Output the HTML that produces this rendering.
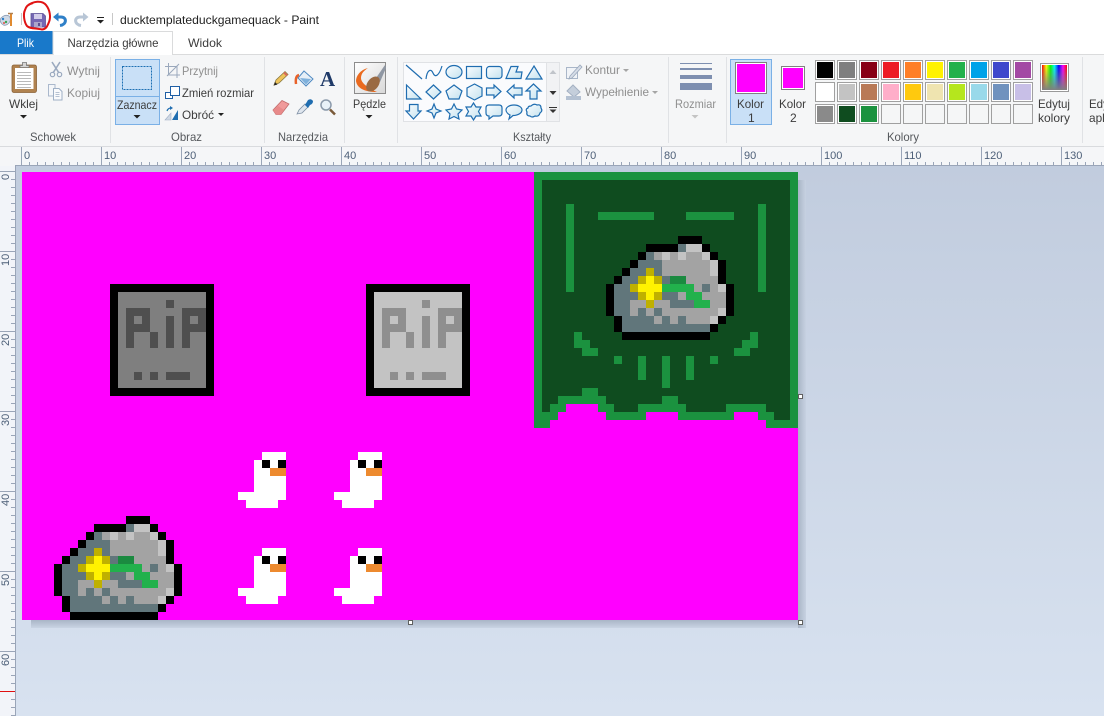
<!DOCTYPE html>
<html><head><meta charset="utf-8"><title>ducktemplateduckgamequack - Paint</title>
<style>
html,body{margin:0;padding:0;width:1104px;height:716px;overflow:hidden;background:#fff}
svg{display:block;position:absolute;left:0;top:0}
text{font-family:"Liberation Sans",sans-serif;font-size:12px;fill:#3c3c3c}
.g{fill:#8f8f8f}
.l{font-size:12px;fill:#55585c}
.r{font-size:11px;fill:#4d5f78}
.p path,.p rect{shape-rendering:crispEdges}
.s path,.s ellipse,.s rect{fill:url(#sf);stroke:#1f6db0;stroke-width:1.2}
</style></head><body>
<svg width="1104" height="716" viewBox="0 0 1104 716" xmlns="http://www.w3.org/2000/svg">
<defs>
<linearGradient id="bg" x1="0" y1="0" x2="0" y2="1"><stop offset="0" stop-color="#c1ccde"/><stop offset="1" stop-color="#d8e2f0"/></linearGradient>
<linearGradient id="sf" x1="0" y1="0" x2="1" y2="1"><stop offset="0" stop-color="#fbfdff"/><stop offset="1" stop-color="#c4e2ee"/></linearGradient>
<linearGradient id="shb" x1="0" y1="0" x2="0" y2="1"><stop offset="0" stop-color="#a9b5c6"/><stop offset="1" stop-color="#c9d4e4"/></linearGradient>
<linearGradient id="shr" x1="0" y1="0" x2="1" y2="0"><stop offset="0" stop-color="#a9b5c6"/><stop offset="1" stop-color="#c7d2e2"/></linearGradient>
<linearGradient id="rb" x1="0" y1="0" x2="1" y2="0"><stop offset="0" stop-color="#f00"/><stop offset=".17" stop-color="#ff0"/><stop offset=".34" stop-color="#0f0"/><stop offset=".5" stop-color="#0ff"/><stop offset=".67" stop-color="#00f"/><stop offset=".84" stop-color="#f0f"/><stop offset="1" stop-color="#f00"/></linearGradient>
<linearGradient id="rg" x1="0" y1="0" x2="0" y2="1"><stop offset="0" stop-color="#808080" stop-opacity="0"/><stop offset="1" stop-color="#808080"/></linearGradient>
<linearGradient id="br" x1="0" y1="0" x2="1" y2="1"><stop offset="0" stop-color="#fff"/><stop offset="1" stop-color="#d8d8d8"/></linearGradient>
<pattern id="tk" x="21" y="0" width="8" height="716" patternUnits="userSpaceOnUse"><rect x="0" y="0" width="1" height="716" fill="#9aa5b8"/></pattern>
<pattern id="tl" x="0" y="171" width="16" height="8" patternUnits="userSpaceOnUse"><rect x="0" y="0" width="16" height="1" fill="#9aa5b8"/></pattern>
<g id="rock" stroke-width="1" fill="none">
<path stroke="#000" d="M9 .5h3M5 1.5h4M12 1.5h1M4 2.5h1M13 2.5h1M3 3.5h1M14 3.5h1M2 4.5h1M14 4.5h1M1 5.5h1M14 5.5h1M0 6.5h1M15 6.5h1M0 7.5h1M15 7.5h1M0 8.5h1M15 8.5h1M0 9.5h1M15 9.5h1M1 10.5h1M14 10.5h1M1 11.5h1M13 11.5h1M2 12.5h11"/>
<path stroke="#61767b" d="M9 1.5h1M5 2.5h1M4 3.5h3M3 4.5h2M6 4.5h1M2 5.5h2M7 5.5h1M1 6.5h2M12 6.5h1M1 7.5h3M7 7.5h2M1 8.5h2M8 8.5h3M1 9.5h2M4 9.5h1M6 9.5h1M2 10.5h4M7 10.5h1M9 10.5h1M2 11.5h11"/>
<path stroke="#a3a3a3" d="M6 2.5h1M8 2.5h1M10 2.5h2M7 3.5h6M7 4.5h6M10 5.5h4M11 6.5h1M13 6.5h1M9 7.5h1M12 7.5h3M3 8.5h2M6 8.5h2M13 8.5h2M3 9.5h1M5 9.5h1M7 9.5h7M6 10.5h1M8 10.5h1M10 10.5h3"/>
<path stroke="#c3c3c3" d="M10 1.5h2M7 2.5h1M9 2.5h1M12 2.5h1M13 3.5h1M13 4.5h1M14 6.5h1M14 9.5h1M13 10.5h1"/>
<path stroke="#bfb000" d="M5 4.5h1M4 5.5h1M6 5.5h1M3 6.5h1M4 7.5h1M6 7.5h1M5 8.5h1"/>
<path stroke="#fff200" d="M5 5.5h1M4 6.5h3M5 7.5h1"/>
<path stroke="#22b14c" d="M7 6.5h4M10 7.5h2M11 8.5h2"/>
<path stroke="#1b8a40" d="M8 5.5h2"/>
</g>
<g id="duck" stroke-width="1" fill="none">
<path stroke="#fff" d="M3 .5h3M2 1.5h1M4 1.5h1M2 2.5h2M2 3.5h4M2 4.5h4M0 5.5h6M1 6.5h4"/>
<path stroke="#000" d="M3 1.5h1M5 1.5h1"/>
<path stroke="#ed8a2f" d="M4 2.5h2"/>
</g>
</defs>

<!-- top chrome -->
<rect width="1104" height="54" fill="#fff"/>
<rect y="54" width="1104" height="92" fill="#f5f6f7"/>
<rect y="54" width="1104" height="1" fill="#dadbdc"/>
<rect y="146" width="1104" height="1" fill="#d9dbde"/>
<rect y="147" width="1104" height="19" fill="#f5f6f8"/>

<!-- QAT -->
<g>
<path d="M1 18 Q5 14 9 16 Q12 19 9 23 Q5 27 2 24 Q-1 21 1 18Z" fill="#cfd9e6" stroke="#8c9db5" stroke-width=".8"/>
<circle cx="3" cy="19" r="1.2" fill="#2f80c8"/><circle cx="6" cy="22" r="1.2" fill="#3aa655"/><circle cx="4" cy="23" r="1" fill="#e0564a"/>
<path d="M11 13 L11 26" stroke="#e08a30" stroke-width="2"/><path d="M8 13.5h5" stroke="#b08050" stroke-width="1.5"/>
<rect x="21" y="13" width="1" height="12" fill="#c8c8c8"/>
<path d="M31 13.5H43L45.5 16V27H31Z" fill="#7467b3" stroke="#5f5499" stroke-width=".8"/>
<rect x="34" y="14" width="8" height="5" fill="#d3cdea"/>
<rect x="34" y="22" width="8" height="5" fill="#aba5cb"/><rect x="38" y="23" width="2" height="3" fill="#5b5090"/>
<path d="M53 17 L58.5 12.5 L58.5 21.5Z" fill="#2f80c8"/>
<path d="M57 17H61C67 17 67 24.5 60 25.5" fill="none" stroke="#2f80c8" stroke-width="3"/>
<path d="M88.5 17 L83 12.5 L83 21.5Z" fill="#b8c6d6"/>
<path d="M84 17H80C74 17 74 24.5 81 25.5" fill="none" stroke="#b8c6d6" stroke-width="3"/>
<rect x="97" y="17" width="7" height="1" fill="#222"/>
<path d="M97 20H104L100.5 23.5Z" fill="#222"/>
<rect x="112" y="13" width="1" height="12" fill="#c8c8c8"/>
</g>
<path d="M27 6C33 1 42 0 46 5C50 10 51 17 49 22C47 27 46 29 42 29.500C36 28 30 29 27 26C24 22 23 14 25 10C26 6 29 4 33 3" fill="none" stroke="#e01414" stroke-width="2"/>
<text x="120" y="24" textLength="199" lengthAdjust="spacingAndGlyphs" fill="#222" style="fill:#222">ducktemplateduckgamequack - Paint</text>

<!-- tabs -->
<rect x="0" y="31" width="53" height="23" fill="#1979ca"/>
<text x="17" y="47" textLength="17" lengthAdjust="spacingAndGlyphs" style="fill:#fff">Plik</text>
<path d="M53 54.5V31.5H172.5V54.5" fill="#fff" stroke="#dadbdc"/>
<rect x="54" y="54" width="118" height="1" fill="#fff"/>
<text x="67.5" y="47" textLength="91" lengthAdjust="spacingAndGlyphs">Narzędzia główne</text>
<text x="188" y="47" textLength="34" lengthAdjust="spacingAndGlyphs">Widok</text>

<!-- separators -->
<path d="M110.5 57V143M264.5 57V143M344.5 57V143M397.5 57V143M668.5 57V143M726.5 57V143M1082.5 57V143" stroke="#e0e2e5" fill="none"/>

<!-- Schowek -->
<rect x="12" y="65" width="24.500" height="27.500" rx="2" fill="#b0824f" stroke="#8a6238" stroke-width=".8"/>
<rect x="15" y="68" width="18.500" height="21" fill="#fff"/>
<path d="M17 72.500h14M17 75.500h14M17 78.500h14M17 81.500h14M17 84.500h14M17 87.500h14" stroke="#b9b9b9"/>
<path d="M20 67.500h9v-2h-2.500v-3h-4v3h-2.500z" fill="#d5d5d5" stroke="#777" stroke-width=".8"/>
<text x="9" y="108" textLength="29" lengthAdjust="spacingAndGlyphs">Wklej</text>
<path d="M20 115H27L23.500 118.500Z" fill="#222"/>
<path d="M52 62L59 73M60 62L53 73" stroke="#9aa9bf" stroke-width="1.6" fill="none"/>
<circle cx="52.500" cy="74.500" r="2.200" fill="none" stroke="#9aa9bf" stroke-width="1.200"/>
<circle cx="59.500" cy="74.500" r="2.200" fill="none" stroke="#9aa9bf" stroke-width="1.200"/>
<text x="67" y="75" textLength="33" lengthAdjust="spacingAndGlyphs" class="g">Wytnij</text>
<path d="M48.500 84.500H55V96H48.500Z" fill="#f4f6f9" stroke="#aab8cc"/>
<path d="M53.500 88.500H59L62 91.500V100H53.500Z" fill="#f9fafc" stroke="#9fb0c6"/>
<path d="M55.500 92.500h4M55.500 94.500h4M55.500 96.500h4" stroke="#b5c1d2"/>
<text x="67" y="97" textLength="33" lengthAdjust="spacingAndGlyphs" class="g">Kopiuj</text>
<text x="30" y="141" textLength="46" lengthAdjust="spacingAndGlyphs" class="l">Schowek</text>

<!-- Obraz -->
<rect x="115.500" y="59.500" width="44" height="65" fill="#c9e0f7" stroke="#7ab0e6"/>
<rect x="115" y="96" width="45" height="1" fill="#7ab0e6"/>
<rect x="122.500" y="66.500" width="29" height="23" fill="none" stroke="#1d6fb3" stroke-dasharray="2 1" shape-rendering="crispEdges"/>
<text x="117" y="109" textLength="40" lengthAdjust="spacingAndGlyphs">Zaznacz</text>
<path d="M133.500 115H140.500L137 118.500Z" fill="#222"/>
<path d="M168.500 63V75H180M165 66.500H177V78M167 76L179 64" fill="none" stroke="#9aa8bc"/>
<text x="182" y="75" textLength="36" lengthAdjust="spacingAndGlyphs" class="g">Przytnij</text>
<rect x="165.500" y="92.500" width="7" height="6" fill="#fff" stroke="#1f5fa5"/>
<rect x="170.500" y="86.500" width="9" height="9" fill="#fff" stroke="#1f5fa5"/>
<text x="182" y="97" textLength="72" lengthAdjust="spacingAndGlyphs">Zmień rozmiar</text>
<path d="M172 120L178 120L178 110Z" fill="#1f6db0"/>
<path d="M165 120L171 120L171 113Z" fill="#cfd8e4" stroke="#9fb0c6" stroke-width=".6"/>
<path d="M167 111Q168 108 171 108" fill="none" stroke="#1f6db0" stroke-width="1.200"/>
<path d="M170 106L173 108L170 110Z" fill="#1f6db0"/>
<text x="182" y="119" textLength="32" lengthAdjust="spacingAndGlyphs">Obróć</text>
<path d="M218 113H224L221 116Z" fill="#222"/>
<text x="171" y="141" textLength="31" lengthAdjust="spacingAndGlyphs" class="l">Obraz</text>

<!-- Narzędzia -->
<path d="M274 85L276 80L285 71.500L288 74.500L279 83Z" fill="#eec35a" stroke="#8a7a40" stroke-width=".8"/>
<path d="M274 85.500L275 82L277.500 84.500Z" fill="#222"/>
<path d="M284 72.500L287 75.500" stroke="#d86a5a" stroke-width="2"/>
<path d="M304 71L313 79L306 86L298 78Z" fill="#e6eff7" stroke="#4f8ac2"/>
<path d="M300 78L311 79L306 84.500Z" fill="#7fb1dc"/>
<path d="M299 75Q295 76 296 84" fill="none" stroke="#e8622a" stroke-width="2.500"/>
<text x="320" y="86" style="font-family:'Liberation Serif',serif;font-weight:bold;font-size:21px;fill:#1f3a68">A</text>
<path d="M273 110L282 100.500L289 104L281 114.500L276 114.500Z" fill="#f09a9a" stroke="#c06a6a" stroke-width=".8"/>
<path d="M273 110L278 106L284 110L281 114.500L276 114.500Z" fill="#e88a8a"/>
<path d="M297 114L299 110L305 104L308 107L302 113Z" fill="#dfe6ee" stroke="#7d8ea3" stroke-width=".8"/>
<path d="M305 105L308 100Q311 98 313 101Q313 104 310 105L308 108Z" fill="#1f6db0"/>
<circle cx="326" cy="105" r="5" fill="#e8f1f8" stroke="#8b9aab" stroke-width="1.500"/>
<path d="M330 109.500L335 114.500" stroke="#7a5a3a" stroke-width="2.500"/>
<text x="278" y="141" textLength="50" lengthAdjust="spacingAndGlyphs" class="l">Narzędzia</text>

<!-- Pędzle -->
<rect x="354.500" y="62.500" width="31" height="31" fill="url(#br)" stroke="#8c8c8c"/>
<path d="M368 68C360 70 356 76 356 81C357 88 364 92 377 92C368 88 361 83 361 78C361 73 365 70 368 68Z" fill="#ea6a1e"/>
<path d="M376 78L385 65L386 68L380 82Z" fill="#8f97a3"/>
<ellipse cx="373" cy="84" rx="5.500" ry="8.500" transform="rotate(38 373 84)" fill="#9a6a42"/>
<text x="353" y="108" textLength="33" lengthAdjust="spacingAndGlyphs">Pędzle</text>
<path d="M365.500 115H372.500L369 118.500Z" fill="#222"/>

<!-- Ksztalty gallery -->
<rect x="403.500" y="62.500" width="143" height="59" fill="#fafbfd" stroke="#e0e2e5"/>
<rect x="546.500" y="62.500" width="13" height="59" fill="#f1f2f4" stroke="#e0e2e5"/>
<path d="M549.500 74H556.500L553 70Z" fill="#c0c4ca"/>
<path d="M549.500 91H556.500L553 95Z" fill="#333"/>
<rect x="549" y="107" width="8" height="1" fill="#333"/>
<path d="M549.500 109.500H556.500L553 113Z" fill="#333"/>
<g class="s">
<path d="M406 65L422 79" style="fill:none"/>
<path d="M426 79C427 70 431 68 433 73C435 78 439 76 442 66" style="fill:none"/>
<ellipse cx="454" cy="72" rx="8" ry="6.500"/>
<rect x="466.500" y="66.500" width="15" height="12"/>
<rect x="486.500" y="66.500" width="15.500" height="12" rx="3"/>
<path d="M511 66.500H518L516 72H522L521 78.500H506Z"/>
<path d="M534 66L542 79H526Z"/>
<path d="M406.500 85L421 99H406.500Z"/>
<path d="M433.500 85L441 92L433.500 99L426 92Z"/>
<path d="M454 85L462 91L459 99H449L446 91Z"/>
<path d="M474.500 84L482 88V96L474.500 100L467 96V88Z"/>
<path d="M486.500 88H494V85L501 91.500L494 98V95H486.500Z"/>
<path d="M522 88H514V85L507 91.500L514 98V95H522Z"/>
<path d="M533.500 84L541 91H537V99H530V91H526Z"/>
<path d="M409.500 104.500H418V111H421L413.500 119L406 111H409.500Z"/>
<path d="M434 104L436 109L441 111L436 113L434 118L432 113L427 111L432 109Z"/>
<path d="M454 104L456.500 109L462 110L458 114L459 119L454 116.500L449 119L450 114L446 110L451.500 109Z"/>
<path d="M473.500 103L476 107H481L478.500 111.500L481 116H476L473.500 120L471 116H466L468.500 111.500L466 107H471Z"/>
<path d="M489 105H499Q502 105 502 108V113Q502 116 499 116H493L489 119V116Q486 116 486 113V108Q486 105 489 105Z"/>
<path d="M514 105C519 105 522 107.500 522 110C522 113 518 115.500 513 115.500L509 119L510 115C508 114 506 112 506 110C506 107.500 509 105 514 105Z"/>
<path d="M531 106Q534 103 537 105Q541 104 541 108Q543 111 540 113Q539 117 535 116Q532 118 530 116Q526 116 527 112Q525 109 528 108Q528 106 531 106Z"/>
</g>
<text x="513" y="141" textLength="38" lengthAdjust="spacingAndGlyphs" class="l">Kształty</text>

<!-- Kontur / Wypelnienie -->
<rect x="566.500" y="67.500" width="11" height="11" fill="#f0f3f7" stroke="#a9b6c8"/>
<path d="M570 76L580 65L582 67L572 78L569 79Z" fill="#d5dce6" stroke="#9aa8bc" stroke-width=".8"/>
<text x="585" y="74" textLength="35" lengthAdjust="spacingAndGlyphs" class="g">Kontur</text>
<path d="M623 69H629L626 72Z" fill="#a5a5a5"/>
<path d="M573 85L580 92L574 97L567 91Z" fill="#c4cedb" stroke="#a3b0c2"/>
<rect x="566" y="96" width="15" height="4" fill="#b4c1d2"/>
<text x="585" y="96" textLength="64" lengthAdjust="spacingAndGlyphs" class="g">Wypełnienie</text>
<path d="M652 91H658L655 94Z" fill="#a5a5a5"/>

<!-- Rozmiar -->
<rect x="680" y="63" width="32" height="1" fill="#7e8fb0"/>
<rect x="680" y="68" width="32" height="2" fill="#7e8fb0"/>
<rect x="680" y="75" width="32" height="4" fill="#7e8fb0"/>
<rect x="680" y="83" width="32" height="7" fill="#7e8fb0"/>
<text x="675" y="108" textLength="41" lengthAdjust="spacingAndGlyphs" class="g">Rozmiar</text>
<path d="M691.500 115H698.500L695 118.500Z" fill="#c4c4c4"/>

<!-- Kolory -->
<rect x="730.500" y="59.500" width="41" height="65" fill="#c9e0f7" stroke="#7ab0e6"/>
<rect x="735.500" y="62.500" width="31" height="31" fill="#fff" stroke="#808080"/>
<rect x="737" y="64" width="28" height="28" fill="#f0f"/>
<text x="737" y="108" textLength="27" lengthAdjust="spacingAndGlyphs">Kolor</text>
<text x="748" y="122">1</text>
<rect x="781.500" y="66.500" width="23" height="23" fill="#fff" stroke="#808080"/>
<rect x="783" y="68" width="20" height="20" fill="#f0f"/>
<text x="779" y="108" textLength="27" lengthAdjust="spacingAndGlyphs">Kolor</text>
<text x="790" y="122">2</text>
<g stroke="#a0a0a0" fill="#fff">
<rect x="815.500" y="60.500" width="19" height="19"/><rect x="837.500" y="60.500" width="19" height="19"/><rect x="859.500" y="60.500" width="19" height="19"/><rect x="881.500" y="60.500" width="19" height="19"/><rect x="903.500" y="60.500" width="19" height="19"/><rect x="925.500" y="60.500" width="19" height="19"/><rect x="947.500" y="60.500" width="19" height="19"/><rect x="969.500" y="60.500" width="19" height="19"/><rect x="991.500" y="60.500" width="19" height="19"/><rect x="1013.500" y="60.500" width="19" height="19"/>
<rect x="815.500" y="82.500" width="19" height="19"/><rect x="837.500" y="82.500" width="19" height="19"/><rect x="859.500" y="82.500" width="19" height="19"/><rect x="881.500" y="82.500" width="19" height="19"/><rect x="903.500" y="82.500" width="19" height="19"/><rect x="925.500" y="82.500" width="19" height="19"/><rect x="947.500" y="82.500" width="19" height="19"/><rect x="969.500" y="82.500" width="19" height="19"/><rect x="991.500" y="82.500" width="19" height="19"/><rect x="1013.500" y="82.500" width="19" height="19"/>
<rect x="815.500" y="104.500" width="19" height="19"/><rect x="837.500" y="104.500" width="19" height="19"/><rect x="859.500" y="104.500" width="19" height="19"/>
</g>
<g stroke="#a0a0a0" fill="#f5f6f7">
<rect x="881.500" y="104.500" width="19" height="19"/><rect x="903.500" y="104.500" width="19" height="19"/><rect x="925.500" y="104.500" width="19" height="19"/><rect x="947.500" y="104.500" width="19" height="19"/><rect x="969.500" y="104.500" width="19" height="19"/><rect x="991.500" y="104.500" width="19" height="19"/><rect x="1013.500" y="104.500" width="19" height="19"/>
</g>
<rect x="817" y="62" width="16" height="16" fill="#000"/><rect x="839" y="62" width="16" height="16" fill="#7f7f7f"/><rect x="861" y="62" width="16" height="16" fill="#880015"/><rect x="883" y="62" width="16" height="16" fill="#ed1c24"/><rect x="905" y="62" width="16" height="16" fill="#ff7f27"/><rect x="927" y="62" width="16" height="16" fill="#fff200"/><rect x="949" y="62" width="16" height="16" fill="#22b14c"/><rect x="971" y="62" width="16" height="16" fill="#00a2e8"/><rect x="993" y="62" width="16" height="16" fill="#3f48cc"/><rect x="1015" y="62" width="16" height="16" fill="#a349a4"/>
<rect x="817" y="84" width="16" height="16" fill="#fff"/><rect x="839" y="84" width="16" height="16" fill="#c3c3c3"/><rect x="861" y="84" width="16" height="16" fill="#b97a57"/><rect x="883" y="84" width="16" height="16" fill="#ffaec9"/><rect x="905" y="84" width="16" height="16" fill="#ffc90e"/><rect x="927" y="84" width="16" height="16" fill="#efe4b0"/><rect x="949" y="84" width="16" height="16" fill="#b5e61d"/><rect x="971" y="84" width="16" height="16" fill="#99d9ea"/><rect x="993" y="84" width="16" height="16" fill="#7092be"/><rect x="1015" y="84" width="16" height="16" fill="#c8bfe7"/>
<rect x="817" y="106" width="16" height="16" fill="#8a8a8a"/><rect x="839" y="106" width="16" height="16" fill="#0f4c1f"/><rect x="861" y="106" width="16" height="16" fill="#1b923f"/>
<rect x="1040.500" y="63.500" width="28" height="28" fill="#fff" stroke="#999"/>
<rect x="1042" y="65" width="25" height="25" fill="url(#rb)"/>
<rect x="1042" y="65" width="25" height="25" fill="url(#rg)"/>
<text x="1038" y="108" textLength="32" lengthAdjust="spacingAndGlyphs">Edytuj</text>
<text x="1038" y="122" textLength="32" lengthAdjust="spacingAndGlyphs">kolory</text>
<text x="1089" y="108" textLength="32" lengthAdjust="spacingAndGlyphs">Edytuj</text>
<text x="1089" y="122" textLength="46" lengthAdjust="spacingAndGlyphs">aplikację</text>
<text x="887" y="141" textLength="32" lengthAdjust="spacingAndGlyphs" class="l">Kolory</text>

<!-- workspace -->
<rect x="0" y="166" width="1104" height="550" fill="url(#bg)"/>
<rect x="16" y="165" width="1088" height="1" fill="#9aa5b8"/>

<!-- top ruler -->
<rect x="21" y="162" width="1083" height="3" fill="url(#tk)"/>
<path d="M21.500 147V165M101.500 147V165M181.500 147V165M261.500 147V165M341.500 147V165M421.500 147V165M501.500 147V165M581.500 147V165M661.500 147V165M741.500 147V165M821.500 147V165M901.500 147V165M981.500 147V165M1061.500 147V165" stroke="#9aa5b8" fill="none"/>
<text class="r" x="24" y="159">0</text><text class="r" x="104" y="159">10</text><text class="r" x="184" y="159">20</text><text class="r" x="264" y="159">30</text><text class="r" x="344" y="159">40</text><text class="r" x="424" y="159">50</text><text class="r" x="504" y="159">60</text><text class="r" x="584" y="159">70</text><text class="r" x="664" y="159">80</text><text class="r" x="744" y="159">90</text><text class="r" x="824" y="159">100</text><text class="r" x="904" y="159">110</text><text class="r" x="984" y="159">120</text><text class="r" x="1064" y="159">130</text>

<!-- left ruler -->
<rect x="0" y="166" width="15" height="550" fill="#f2f4f9"/>
<rect x="15" y="165" width="1" height="551" fill="#9aa5b8"/>
<rect x="11" y="171" width="4" height="545" fill="url(#tl)"/>
<path d="M0 171.500H15M0 251.500H15M0 331.500H15M0 411.500H15M0 491.500H15M0 571.500H15M0 651.500H15" stroke="#9aa5b8" fill="none"/>
<text class="r" transform="translate(9 180) rotate(-90)">0</text>
<text class="r" transform="translate(9 266) rotate(-90)">10</text>
<text class="r" transform="translate(9 346) rotate(-90)">20</text>
<text class="r" transform="translate(9 426) rotate(-90)">30</text>
<text class="r" transform="translate(9 506) rotate(-90)">40</text>
<text class="r" transform="translate(9 586) rotate(-90)">50</text>
<text class="r" transform="translate(9 666) rotate(-90)">60</text>
<rect x="0" y="691" width="15" height="1" fill="#e01010"/>

<!-- shadow -->
<rect x="31" y="620" width="775" height="8" fill="url(#shb)"/>
<rect x="798" y="180" width="8" height="448" fill="url(#shr)"/>

<!-- canvas -->
<rect x="22" y="172" width="776" height="448" fill="#f0f"/>
<g class="p" transform="translate(22 172) scale(8)" fill="none" stroke-width="1" shape-rendering="crispEdges">
<!-- banner -->
<g transform="translate(64 0)">
<rect x="0" y="0" width="33" height="32" fill="#0f4c1f"/>
<path stroke="#1b923f" d="M0 .5h33M.5 0v32M32.500 0v32"/>
<path stroke="#1b923f" d="M4.500 4v11M28.500 4v11M8 5.500h7M19 5.500h6M5.500 20v2M6 21.500h1M6 22.500h2M27.500 20v1M26 21.500h2M25 22.500h2M10 23.500h1M22 23.500h1M13.500 23v3M16.500 23v4M19.500 23v3"/>
<path stroke="#1b923f" d="M6 27.500h2M3 28.500h6M16 28.500h2M2 29.500h2M8 29.500h2M13 29.500h6M24 29.500h5M0 30.500h3M9 30.500h5M18 30.500h7M28 30.500h2M0 31.500h2M29 31.500h4"/>
<path stroke="#f0f" d="M4 29.500h4M3 30.500h6M14 30.500h4M25 30.500h3M2 31.500h27"/>
</g>
<use href="#rock" x="73" y="8"/>
<use href="#rock" x="4" y="43"/>
<!-- RIP dark -->
<g transform="translate(11 14)">
<rect x="0" y="0" width="13" height="14" fill="#000"/>
<rect x="1" y="1" width="11" height="12" fill="#7f7f7f"/>
<path stroke="#4f4f4f" d="M7 2.500h1M2 3.500h3M9 3.500h3M2 4.500h1M4 4.500h1M7 4.500h1M9 4.500h1M11 4.500h1M2 5.500h3M7 5.500h1M9 5.500h3M2 6.500h1M5 6.500h1M7 6.500h1M9 6.500h1M2 7.500h1M5 7.500h1M7 7.500h1M9 7.500h1M3 11.500h1M5 11.500h1M7 11.500h3"/>
</g>
<!-- RIP light -->
<g transform="translate(43 14)">
<rect x="0" y="0" width="13" height="14" fill="#000"/>
<rect x="1" y="1" width="11" height="12" fill="#c3c3c3"/>
<path stroke="#8f8f8f" d="M7 2.500h1M2 3.500h3M9 3.500h3M2 4.500h1M4 4.500h1M7 4.500h1M9 4.500h1M11 4.500h1M2 5.500h3M7 5.500h1M9 5.500h3M2 6.500h1M5 6.500h1M7 6.500h1M9 6.500h1M2 7.500h1M5 7.500h1M7 7.500h1M9 7.500h1M3 11.500h1M5 11.500h1M7 11.500h3"/>
</g>
<use href="#duck" x="27" y="35"/>
<use href="#duck" x="39" y="35"/>
<use href="#duck" x="27" y="47"/>
<use href="#duck" x="39" y="47"/>
</g>

<!-- handles -->
<rect x="798.500" y="394.500" width="4" height="4" fill="#fff" stroke="#606060"/>
<rect x="798.500" y="620.500" width="4" height="4" fill="#fff" stroke="#606060"/>
<rect x="408.500" y="620.500" width="4" height="4" fill="#fff" stroke="#606060"/>
</svg>
</body></html>
